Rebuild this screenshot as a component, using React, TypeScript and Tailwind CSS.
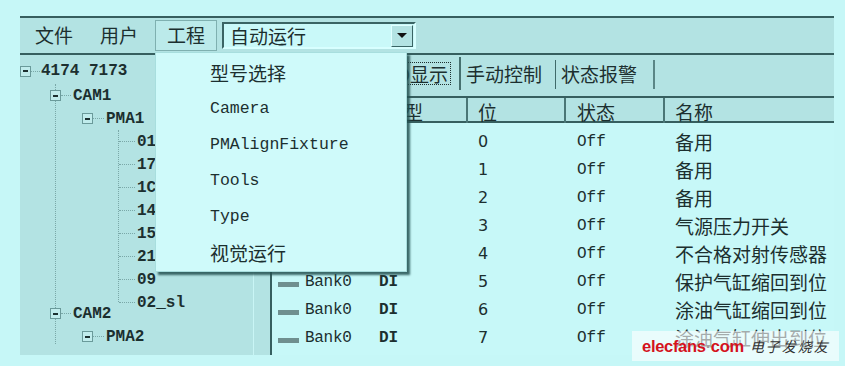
import React from "react";

const cjk = "font-['Noto_Sans_CJK_SC',sans-serif]";
const mono = "font-['Liberation_Mono',monospace]";

const rows = [
  { bit: "0", name: "备用" },
  { bit: "1", name: "备用" },
  { bit: "2", name: "备用" },
  { bit: "3", name: "气源压力开关" },
  { bit: "4", name: "不合格对射传感器" },
  { bit: "5", name: "保护气缸缩回到位" },
  { bit: "6", name: "涂油气缸缩回到位" },
  { bit: "7", name: "涂油气缸伸出到位" },
];

const leaves = ["01", "17", "1C", "14", "15", "21", "09", "02_sl"];

const menuItems = [
  { t: "型号选择", zh: true },
  { t: "Camera", zh: false },
  { t: "PMAlignFixture", zh: false },
  { t: "Tools", zh: false },
  { t: "Type", zh: false },
  { t: "视觉运行", zh: true },
];

const Box = () => (
  <span className="w-[11px] h-[11px] shrink-0 border border-[#6a9a9a] bg-[#c0ecec] flex items-center justify-center">
    <span className="w-[5px] h-[2px] bg-[#1c3030]" />
  </span>
);

const Dash = ({ w }: { w: string }) => (
  <span className={`${w} shrink-0 border-t border-dotted border-[#7aa8a8]`} />
);

const Node = ({ label, dash }: { label: string; dash: string }) => (
  <div className="h-[23px] flex items-center">
    <Box />
    <Dash w={dash} />
    <span className="ml-[2px]">{label}</span>
  </div>
);

const App = () => {
  return (
    <div className="w-[845px] h-[366px] bg-[#c6f7f7] relative overflow-hidden pt-[16px] pl-[20px] text-[#1c2f2f]">
      <div className="w-[814px] flex flex-col">
        {/* menu bar */}
        <div className={`h-[39px] bg-[#b3e3e3] border-t-2 border-b-2 border-[#365f5f] flex items-center text-[19px] ${cjk}`}>
          <span className="ml-[15px]">文件</span>
          <span className="ml-[27px]">用户</span>
          <div className="ml-[17px] w-[62px] h-[31px] border border-[#7fb0b0] bg-[#bbeaea] flex items-center justify-center">
            工程
          </div>
          <div className="ml-[5px] w-[194px] h-[27px] border-2 border-t-[#3a6464] border-l-[#3a6464] border-b-[#d8ffff] border-r-[#d8ffff] bg-[#c9f9f9] flex items-center">
            <span className="ml-[6px] flex-1 leading-none">自动运行</span>
            <div className="w-[22px] h-[22px] mr-[1px] bg-[#b3e3e3] border border-t-[#e0ffff] border-l-[#e0ffff] border-b-[#3a6464] border-r-[#3a6464] flex items-center justify-center">
              <span className="w-0 h-0 border-l-[5px] border-r-[5px] border-t-[5px] border-l-transparent border-r-transparent border-t-[#111]" />
            </div>
          </div>
        </div>

        {/* content */}
        <div className="h-[300px] flex">
          {/* tree */}
          <div className={`w-[233px] bg-[#b3e3e3] overflow-hidden pt-[3px] text-[16px] font-bold ${mono}`}>
            <div className="h-[26px] flex items-center">
              <Box />
              <Dash w="w-[9px]" />
              <span className="ml-[1px]">4174 7173</span>
            </div>
            <div className="ml-[35px] border-l border-dotted border-[#7aa8a8] h-[260px]">
              <div className="-ml-[6px]">
                <Node label="CAM1" dash="w-[10px]" />
              </div>
              <div className="ml-[26px]">
                <Node label="PMA1" dash="w-[11px]" />
              </div>
              <div className="ml-[62px] border-l border-dotted border-[#7aa8a8] h-[172px]">
                {leaves.map((l) => (
                  <div key={l} className="h-[23px] flex items-center">
                    <Dash w="w-[16px]" />
                    <span className="ml-[2px]">{l}</span>
                  </div>
                ))}
              </div>
              <div className="-ml-[6px]">
                <Node label="CAM2" dash="w-[10px]" />
              </div>
              <div className="ml-[26px]">
                <Node label="PMA2" dash="w-[11px]" />
              </div>
            </div>
          </div>
          <div className="w-[1px] bg-[#c9f5f5]" />
          <div className="w-[16px] bg-[#b3e3e3]" />

          {/* right panel */}
          <div className="flex-1 flex flex-col">
            <div className={`h-[41px] bg-[#b3e3e3] flex items-start pt-[2px] text-[19px] ${cjk}`}>
              <div className="w-[191px] h-[33px] flex items-center justify-end pr-[8px] border-r-2 border-[#46706f]">
                <span className="border border-dotted border-[#1c2f2f] px-[2px] leading-[21px]">IO显示</span>
              </div>
              <div className="w-[95px] h-[29px] mt-[3px] flex items-center pl-[5px] border-r border-[#3f6a6a]">
                手动控制
              </div>
              <div className="w-[99px] h-[29px] mt-[3px] flex items-center pl-[5px] border-r-2 border-[#5a8686]">
                状态报警
              </div>
            </div>
            <div className="flex-1 flex flex-col border-l-2 border-[#365f5f]">
              <div className={`h-[27px] bg-[#b3e3e3] border-t-2 border-b-2 border-[#365f5f] grid grid-cols-[103px_91px_98px_99px_1fr] text-[19px] ${cjk}`}>
                <div className="pl-[18px] flex items-center">名称</div>
                <div className="pl-[10px] flex items-center">类型</div>
                <div className="pl-[10px] flex items-center border-l-2 border-[#4a7676]">位</div>
                <div className="pl-[11px] flex items-center border-l-2 border-[#4a7676]">状态</div>
                <div className="pl-[10px] flex items-center border-l-2 border-[#4a7676]">名称</div>
              </div>
              <div className="flex-1 bg-[#c7f8f8] pt-[5px]">
                {rows.map((r) => (
                  <div key={r.bit} className="h-[28px] grid grid-cols-[103px_91px_98px_99px_1fr] items-center">
                    <div className={`pl-[6px] flex items-center text-[16px] ${mono}`}>
                      <span className="w-[21px] h-[5px] mt-[5px] bg-[#6f8f8f]" />
                      <span className="ml-[6px] tracking-[-0.3px]">Bank0</span>
                    </div>
                    <div className={`pl-[4px] text-[16px] font-bold ${mono}`}>DI</div>
                    <div className="pl-[12px] text-[16px] font-['DejaVu_Sans',sans-serif]">{r.bit}</div>
                    <div className={`pl-[13px] text-[16px] ${mono}`}>Off</div>
                    <div className={`pl-[12px] text-[19px] whitespace-nowrap ${cjk}`}>{r.name}</div>
                  </div>
                ))}
              </div>
            </div>
          </div>
        </div>
      </div>

      {/* dropdown menu */}
      <div className="absolute left-[155px] top-[52px] w-[252px] h-[220px] bg-[#cffafa] border border-[#a8dede] shadow-[3px_3px_2px_rgba(35,80,80,0.85)] pt-[2px]">
        {menuItems.map((m) => (
          <div
            key={m.t}
            className={`h-[36px] flex items-center pl-[54px] ${m.zh ? `text-[19px] ${cjk}` : `text-[16.5px] ${mono}`}`}
          >
            {m.t}
          </div>
        ))}
      </div>

      {/* watermark */}
      <div className="absolute left-[632px] top-[331px] w-[207px] h-[30px] bg-white/60 flex items-center pl-[10px] whitespace-nowrap">
        <span className="text-[16.5px] font-bold text-[#d4121c] tracking-[-0.3px] leading-none font-['Liberation_Sans',sans-serif]">
          elecfans<span className="text-[#a09a9a]">·</span>com
        </span>
        <span className={`ml-[6px] text-[14px] italic tracking-[2px] text-[#333] ${cjk}`}>电子发烧友</span>
      </div>
    </div>
  );
};

export default App;
